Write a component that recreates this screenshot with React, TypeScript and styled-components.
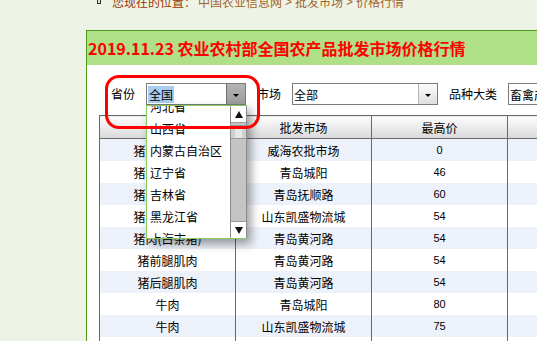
import styled, { createGlobalStyle } from 'styled-components';

const GlobalStyle = createGlobalStyle`
  html, body {
    margin: 0;
    padding: 0;
  }
  body {
    width: 537px;
    height: 341px;
    overflow: hidden;
    background: #edf4e5;
    font-family: "Noto Sans CJK SC", "Liberation Sans", sans-serif;
    font-size: 12px;
    color: #000;
  }
`;

const provinces = ['河北省', '山西省', '内蒙古自治区', '辽宁省', '吉林省', '黑龙江省', '上海市', '江苏省'];

const rows = [
  { name: '猪肉(白条猪)', market: '威海农批市场', high: '0', low: '0' },
  { name: '猪肉(白条猪)', market: '青岛城阳', high: '46', low: '44' },
  { name: '猪肉(白条猪)', market: '青岛抚顺路', high: '60', low: '56' },
  { name: '猪肉(白条猪)', market: '山东凯盛物流城', high: '54', low: '50' },
  { name: '猪肉(白条猪)', market: '青岛黄河路', high: '54', low: '52' },
  { name: '猪前腿肌肉', market: '青岛黄河路', high: '54', low: '52' },
  { name: '猪后腿肌肉', market: '青岛黄河路', high: '54', low: '52' },
  { name: '牛肉', market: '青岛城阳', high: '80', low: '78' },
  { name: '牛肉', market: '山东凯盛物流城', high: '75', low: '72' },
  { name: '羊肉', market: '青岛城阳', high: '78', low: '76' },
];

export default function App() {
  return (
    <Page>
      <GlobalStyle />
      <Crumb>
        <CrumbLine>
          <CrumbIcon />
          <CrumbLabel>您现在的位置：</CrumbLabel>
          <CrumbLink>中国农业信息网</CrumbLink>
          <CrumbSep>&gt;</CrumbSep>
          <CrumbLink>批发市场</CrumbLink>
          <CrumbSep>&gt;</CrumbSep>
          <CrumbLink>价格行情</CrumbLink>
        </CrumbLine>
      </Crumb>

      <Panel>
        <PanelHeader>2019.11.23 农业农村部全国农产品批发市场价格行情</PanelHeader>
        <PanelBody>
          <Filters>
            <FilterLabel>省份</FilterLabel>
            <SelectBox $w={100}>
              <SelectValue>
                <Highlight>全国</Highlight>
              </SelectValue>
              <ArrowBtn $pressed>
                <DownTri />
              </ArrowBtn>
              <DropList>
                <ListItems>
                  {provinces.map((p) => (
                    <ListItem key={p}>{p}</ListItem>
                  ))}
                </ListItems>
                <ScrollBar>
                  <ScrollBtn>
                    <UpTri />
                  </ScrollBtn>
                  <ScrollThumb />
                  <ScrollTrack />
                  <ScrollBtn>
                    <DownTriBig />
                  </ScrollBtn>
                </ScrollBar>
              </DropList>
            </SelectBox>
            <FilterLabel>市场</FilterLabel>
            <SelectBox $w={146}>
              <SelectValue>全部</SelectValue>
              <ArrowBtn>
                <DownTri />
              </ArrowBtn>
            </SelectBox>
            <FilterLabel>品种大类</FilterLabel>
            <SelectBox $w={120}>
              <SelectValue>畜禽产品</SelectValue>
              <ArrowBtn>
                <DownTri />
              </ArrowBtn>
            </SelectBox>
          </Filters>

          <PriceTable>
            <thead>
              <tr>
                <Th>品名</Th>
                <Th>批发市场</Th>
                <Th>最高价</Th>
                <Th>最低价</Th>
              </tr>
            </thead>
            <tbody>
              {rows.map((r, i) => (
                <Tr key={i} $alt={i % 2 === 0}>
                  <Td>{r.name}</Td>
                  <Td>{r.market}</Td>
                  <NumTd>{r.high}</NumTd>
                  <NumTd>{r.low}</NumTd>
                </Tr>
              ))}
            </tbody>
          </PriceTable>
        </PanelBody>
      </Panel>

      <Annotation />
    </Page>
  );
}

const Page = styled.div`
  position: relative;
  width: 537px;
  height: 341px;
  overflow: hidden;
`;

const Crumb = styled.div`
  height: 30px;
  overflow: hidden;
  padding-left: 97px;
`;

const CrumbLine = styled.div`
  display: flex;
  align-items: center;
  height: 16px;
  margin-top: -6px;
  line-height: 16px;
  white-space: nowrap;
`;

const CrumbIcon = styled.span`
  width: 2px;
  height: 8px;
  margin-top: -6px;
  margin-right: 11px;
  border: 1px solid #333;
  background: #ddd;
`;

const CrumbLabel = styled.span`
  color: #993300;
  margin-right: 2px;
`;

const CrumbLink = styled.span`
  color: #a2632c;
`;

const CrumbSep = styled.span`
  font-family: "Liberation Sans", sans-serif;
  color: #a2632c;
  margin: 0 3px;
`;

const Panel = styled.div`
  margin-left: 86px;
  width: 560px;
  height: 330px;
  border: 1px solid #4c9a1c;
  background: #fff;
`;

const PanelHeader = styled.div`
  height: 34px;
  line-height: 35px;
  padding-left: 1px;
  background: #afdf87;
  color: #ff0000;
  font-size: 16px;
  font-weight: bold;
  white-space: nowrap;
`;

const PanelBody = styled.div`
  padding: 18px 0 0 12px;
`;

const Filters = styled.div`
  display: flex;
  align-items: center;
  gap: 11px;
  height: 22px;
  padding-left: 12px;
  white-space: nowrap;
`;

const FilterLabel = styled.span`
  line-height: 22px;
`;

const SelectBox = styled.div<{ $w: number }>`
  position: relative;
  flex: none;
  display: flex;
  align-items: stretch;
  box-sizing: border-box;
  width: ${(p) => p.$w}px;
  height: 22px;
  border: 1px solid #7a7a7a;
  background: #fff;
`;

const SelectValue = styled.span`
  flex: 1;
  display: flex;
  align-items: center;
  padding-left: 1px;
  overflow: hidden;
`;

const Highlight = styled.span`
  background: #a9cdf1;
  padding: 0 1px;
  line-height: 17px;
`;

const ArrowBtn = styled.span<{ $pressed?: boolean }>`
  width: 18px;
  display: flex;
  align-items: center;
  justify-content: center;
  border-left: 1px solid ${(p) => (p.$pressed ? '#6e6e6e' : '#b5b5b5')};
  background: ${(p) =>
    p.$pressed ? 'linear-gradient(#b4b4b4, #9c9c9c)' : 'linear-gradient(#fbfbfb, #dedede)'};
`;

const DownTri = styled.span`
  width: 0;
  height: 0;
  border-left: 3px solid transparent;
  border-right: 3px solid transparent;
  border-top: 3px solid #000;
  margin-top: 2px;
`;

const DownTriBig = styled.span`
  width: 0;
  height: 0;
  border-left: 4px solid transparent;
  border-right: 4px solid transparent;
  border-top: 7px solid #111;
`;

const UpTri = styled.span`
  width: 0;
  height: 0;
  border-left: 4px solid transparent;
  border-right: 4px solid transparent;
  border-bottom: 7px solid #111;
`;

const DropList = styled.div`
  position: absolute;
  top: 21px;
  left: -1px;
  z-index: 2;
  display: flex;
  box-sizing: border-box;
  width: 101px;
  height: 134px;
  border: 1px solid #86cc5e;
  border-right: none;
  background: #fff;
  box-shadow: 4px 5px 9px rgba(0, 0, 0, 0.38);
`;

const ListItems = styled.div`
  flex: 1;
  overflow: hidden;
  display: flex;
  flex-direction: column;
`;

const ListItem = styled.div`
  flex: none;
  height: 22px;
  line-height: 22px;
  padding-left: 3px;
  white-space: nowrap;
  &:first-child {
    margin-top: -10px;
  }
`;

const ScrollBar = styled.div`
  width: 15px;
  display: flex;
  flex-direction: column;
  border-left: 1px solid #8a8a8a;
  border-right: 1px solid #8a8a8a;
  background: #c4c4c4;
`;

const ScrollBtn = styled.div`
  flex: none;
  height: 16px;
  display: flex;
  align-items: center;
  justify-content: center;
  background: #fff;
  border-bottom: 1px solid #9a9a9a;
  &:last-child {
    border-bottom: none;
    border-top: 1px solid #9a9a9a;
  }
`;

const ScrollThumb = styled.div`
  flex: none;
  height: 12px;
  margin-top: 2px;
  border-top: 1px solid #9a9a9a;
  border-bottom: 1px solid #9a9a9a;
  background: linear-gradient(90deg, #cfcfcf 0 30%, #e6e6e6 30% 75%, #cfcfcf 75%);
`;

const ScrollTrack = styled.div`
  flex: 1;
`;

const PriceTable = styled.table`
  margin-top: 10px;
  border-collapse: collapse;
  table-layout: fixed;
  width: 541px;
`;

const Th = styled.th`
  width: 135px;
  height: 22px;
  padding: 0;
  border: 1px solid #6a6a6a;
  background: linear-gradient(#fdfdfd, #d9d9d9);
  font-weight: normal;
  text-align: center;
`;

const Tr = styled.tr<{ $alt: boolean }>`
  background: ${(p) => (p.$alt ? '#edf2fa' : '#fff')};
`;

const Td = styled.td`
  height: 22px;
  padding: 0;
  border-left: 1px solid #6a6a6a;
  border-right: 1px solid #6a6a6a;
  text-align: center;
  white-space: nowrap;
`;

const NumTd = styled(Td)`
  font-family: "Liberation Sans", sans-serif;
  font-size: 11px;
`;

const Annotation = styled.div`
  position: absolute;
  left: 105px;
  top: 75px;
  z-index: 3;
  box-sizing: border-box;
  width: 155px;
  height: 54px;
  border: 3px solid #ff0000;
  border-radius: 14px;
  pointer-events: none;
`;
